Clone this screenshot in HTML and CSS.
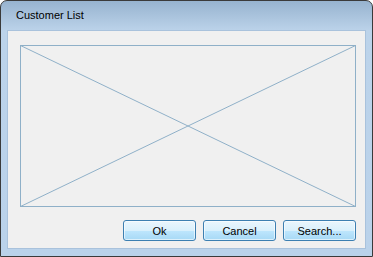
FILE: index.html
```html
<!DOCTYPE html>
<html lang="en">
<head>
  <meta charset="UTF-8" />
  <title>Customer List</title>
  <link rel="stylesheet" href="styles.css">
</head>
<body>
  <div class="window">
    <div class="titlebar">Customer List</div>
    <div class="client">
      <div class="placeholder">
        <svg width="336" height="162" viewBox="0 0 336 162">
          <rect x="0.5" y="0.5" width="335" height="161" />
          <line x1="0.5" y1="0.5" x2="335.5" y2="161.5" />
          <line x1="335.5" y1="0.5" x2="0.5" y2="161.5" />
        </svg>
      </div>
      <div class="buttons">
        <button>Ok</button>
        <button>Cancel</button>
        <button>Search...</button>
      </div>
    </div>
  </div>
</body>
</html>
```

FILE: styles.css
```css
body {
  margin: 0;
  background-color: #ffffff;
  font-family: "Liberation Sans", Arial, sans-serif;
}
.window {
  width: 373px;
  height: 257px;
  box-sizing: border-box;
  border: 1px solid #3a3a3a;
  border-radius: 7px 7px 0 0;
  background: linear-gradient(#97b3cf, #bcd3ea 30px, #bad2ea);
  display: flex;
  flex-direction: column;
}
.titlebar {
  height: 30px;
  line-height: 29px;
  padding-left: 15px;
  font-size: 11px;
  color: #000;
}
.client {
  flex: 1;
  margin: 0 6px 7px 6px;
  background-color: #f0f0f0;
  border: 1px solid #a9c2dc;
  padding: 14px 9px 7px 12px;
}
.placeholder svg {
  display: block;
}
.placeholder rect {
  fill: none;
  stroke: #8fb0c8;
}
.placeholder line {
  stroke: #8fb0c8;
}
.buttons {
  display: flex;
  justify-content: flex-end;
  gap: 7px;
  margin-top: 13px;
}
button {
  width: 73px;
  height: 21px;
  padding: 0;
  border: 1px solid #3c7fb1;
  border-radius: 3px;
  background: linear-gradient(#eaf6fd, #d9f0fc 50%, #bee6fd 51%, #a7d9f5);
  box-shadow: inset 0 0 0 1px rgba(255, 255, 255, 0.6);
  font-family: "Liberation Sans", Arial, sans-serif;
  font-size: 11px;
  color: #000;
}
```
